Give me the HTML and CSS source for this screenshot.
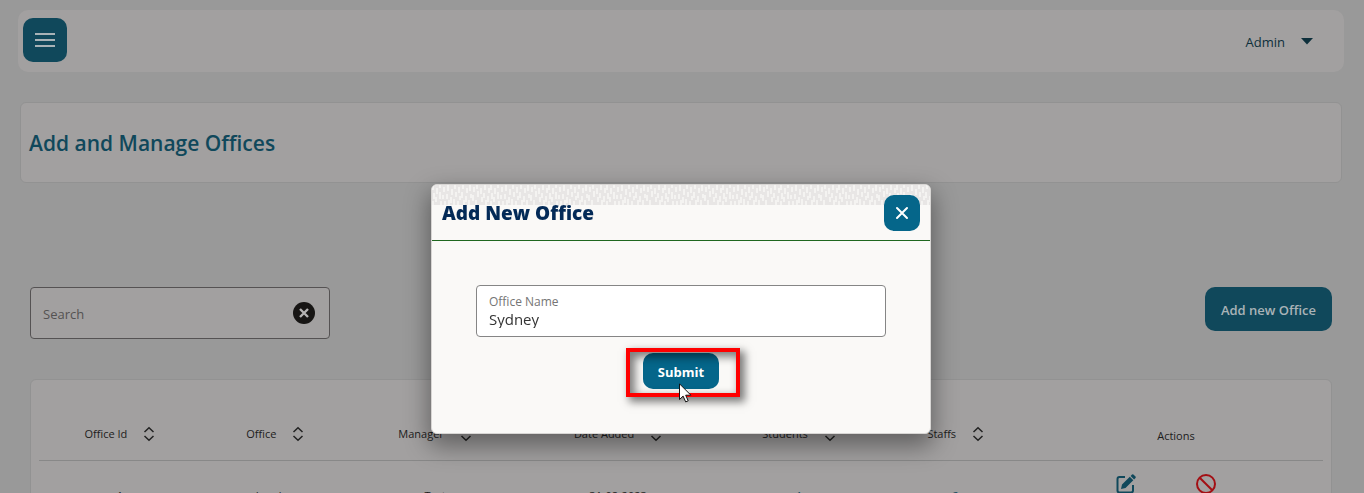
FILE: index.html
```html
<!DOCTYPE html>
<html lang="en">
<head>
<meta charset="utf-8">
<title>Add and Manage Offices</title>
<link rel="stylesheet" href="styles.css">
</head>
<body>
<svg class="defs" aria-hidden="true">
  <symbol id="sort" viewBox="0 0 12 16"><path d="M1.500 6 6 1.800 10.500 6M1.500 10 6 14.200 10.500 10" fill="none" stroke="#222" stroke-width="1.500"/></symbol>
</svg>
<div class="page">
  <header class="topbar">
    <button class="menu" aria-label="Menu"><svg width="22" height="16" viewBox="0 0 22 16"><path d="M1 2h20M1 8h20M1 14h20" stroke="#a9b3b7" stroke-width="2"/></svg></button>
    <button class="account">Admin <svg width="12" height="7" viewBox="0 0 12 7"><path d="M0 0h12L6 6.500z" fill="#0d2f3b"/></svg></button>
  </header>
  <section class="title-card"><h1>Add and Manage Offices</h1></section>
  <main class="content">
    <div class="tools">
      <div class="search">
        <input type="text" placeholder="Search" aria-label="Search">
        <button class="clear" aria-label="Clear search"><svg width="22" height="22" viewBox="0 0 22 22"><circle cx="11" cy="11" r="11" fill="#171514"/><path d="m7 7 8 8M15 7l-8 8" stroke="#b4b2b2" stroke-width="2.400"/></svg></button>
      </div>
      <button class="add">Add new Office</button>
    </div>
    <div class="table-card">
      <table>
        <colgroup><col class="c-id"><col class="c-office"><col class="c-manager"><col class="c-date"><col class="c-students"><col class="c-staffs"><col></colgroup>
        <thead><tr>
          <th><button class="sort">Office Id <svg><use href="#sort"/></svg></button></th>
          <th><button class="sort">Office <svg><use href="#sort"/></svg></button></th>
          <th><button class="sort">Manager <svg><use href="#sort"/></svg></button></th>
          <th><button class="sort">Date Added <svg><use href="#sort"/></svg></button></th>
          <th><button class="sort">Students <svg><use href="#sort"/></svg></button></th>
          <th><button class="sort">Staffs <svg><use href="#sort"/></svg></button></th>
          <th class="plain">Actions</th>
        </tr></thead>
        <tbody><tr>
          <td>1</td><td>London</td><td>Test</td><td>31-08-2023</td>
          <td><a href="#">1</a></td><td><a href="#">2</a></td>
          <td><div class="actions">
            <button aria-label="Edit"><svg width="20" height="20" viewBox="0 0 20 20"><path d="M9 3H3.500Q1.500 3 1.500 5v11.500q0 2 2 2H15q2 0 2-2V11" fill="none" stroke="#10485b" stroke-width="2"/><path d="m5 15 1-4.500 7.800-7.800 3.500 3.500L9.500 14zM14.600 1.900 16 .5q.7-.6 1.400 0l2.100 2.100q.6.700 0 1.400l-1.400 1.400z" fill="#10485b"/></svg></button>
            <button aria-label="Disable"><svg width="20" height="20" viewBox="0 0 20 20"><circle cx="10" cy="10" r="9" fill="none" stroke="#a30f14" stroke-width="2"/><path d="m3.700 3.700 12.600 12.600" stroke="#a30f14" stroke-width="2"/></svg></button>
          </div></td>
        </tr></tbody>
      </table>
    </div>
  </main>
</div>
<div class="backdrop">
  <form class="dialog" role="dialog" aria-labelledby="dialog-title">
    <div class="dialog-head">
      <svg class="texture" width="100%" height="20" aria-hidden="true">
        <defs><pattern id="strokes" width="58" height="21" patternUnits="userSpaceOnUse">
          <path d="M1 0v5M2 8v6M1 16v5M5 3v6M4 12v5M8 0v3M8 7v7M9 16v5M12 2v5M11 10v4M13 16v5M16 0v6M15 9v5M17 15v6M20 4v6M19 12v6M23 0v4M24 7v5M22 14v6M27 2v6M28 11v4M26 16v5M31 0v4M30 7v6M32 15v6M35 3v5M34 11v6M38 0v6M39 9v4M37 15v5M42 2v5M41 10v6M45 0v4M46 6v6M44 15v6M49 3v6M50 12v5M53 0v5M52 8v5M54 15v6M57 3v5M56 11v6" stroke="#fbfaf8" stroke-width="1.300"/>
        </pattern></defs>
        <rect width="100%" height="20" fill="#e8e6e5"/><rect width="100%" height="20" fill="url(#strokes)"/>
      </svg>
      <h2 id="dialog-title">Add New Office</h2>
      <button type="button" class="close" aria-label="Close"><svg width="14" height="14" viewBox="0 0 14 14"><path d="m2 2 10 10M12 2 2 12" stroke="#fff" stroke-width="2" stroke-linecap="round"/></svg></button>
    </div>
    <div class="dialog-body">
      <div class="field"><label for="office">Office Name</label><input id="office" type="text" value="Sydney"></div>
      <div class="submit-wrap">
        <button type="button" class="submit">Submit</button>
        <div class="highlight"></div>
        <svg class="cursor" width="13" height="20" viewBox="0 0 13 20"><path d="M.5.8v15.700l3.600-3.400 2.600 5.800 2.500-1.100-2.500-5.600h5.200z" fill="#fff" stroke="#111"/></svg>
      </div>
    </div>
  </form>
</div>
</body>
</html>
```

FILE: styles.css
```css
* { box-sizing: border-box; }
html, body { height: 100%; }
body { margin: 0; overflow: hidden; background: #999; color: #1c1c1c; font-family: "Segoe UI", "Open Sans", "Noto Sans", sans-serif; }
button, input { font: inherit; color: inherit; }
button { border: 0; padding: 0; background: none; }
.defs { position: absolute; width: 0; height: 0; }
.page { height: 100%; overflow: hidden; padding: 10px 20px 0 18px; }
.topbar { display: flex; align-items: flex-start; justify-content: space-between; height: 62px; padding: 8px 31px 0 5px; border-radius: 10px; background: #a2a0a0; }
.menu { display: grid; place-items: center; width: 44px; height: 44px; border-radius: 10px; background: #10485b; }
.account { display: flex; align-items: center; gap: 16px; height: 47px; font-size: 13px; color: #0d2f3b; }
.title-card { display: flex; align-items: center; height: 81px; margin: 30px 2px 0; padding: 0 8px; border: 1px solid #929292; border-radius: 6px; background: #a2a0a0; }
h1 { margin: 0; font-size: 21px; font-weight: 600; color: #10485b; }
.content { padding: 104px 12px 0; }
.tools { display: flex; align-items: flex-start; justify-content: space-between; }
.search { display: flex; align-items: center; width: 300px; height: 52px; padding: 0 14px 0 12px; border: 1px solid #555253; border-radius: 4px; background: #a2a0a0; }
.search input { flex: 1; min-width: 0; padding: 2px 0 0; border: 0; background: none; outline: 0; font-size: 13px; }
.search input::placeholder { color: #545252; opacity: 1; }
.clear { display: grid; }
.add { height: 44px; padding: 2px 16px 0; border-radius: 10px; background: #10485b; color: #a9b3b7; font-size: 13px; font-weight: 600; }
.table-card { height: 300px; margin-top: 40px; padding: 28px 8px; border: 1px solid #929292; border-radius: 6px; background: #a2a0a0; }
table { width: 100%; table-layout: fixed; border-collapse: collapse; font-size: 11px; }
.c-id { width: 12.6%; }
.c-office { width: 11.6%; }
.c-manager { width: 13.3%; }
.c-date { width: 15.2%; }
.c-students { width: 13%; }
.c-staffs { width: 11.4%; }
th { height: 52px; padding: 0; border-bottom: 1px solid #888; font-weight: 400; }
.plain { padding-top: 3px; }
.sort { display: inline-flex; align-items: center; gap: 16px; }
.sort svg { width: 12px; height: 16px; }
td { height: 70px; padding: 0; text-align: center; }
td a { color: #10485b; text-decoration: none; }
.actions { display: flex; justify-content: center; gap: 60px; padding-bottom: 22px; margin-right: 20px; }
.actions button { display: grid; }
.backdrop { position: fixed; inset: 0; display: flex; align-items: flex-start; justify-content: center; padding: 184px 2px 0 0; }
.dialog { width: 500px; max-width: 100%; border: 1px solid #d8d6d4; border-radius: 6px; overflow: clip; background: #faf9f7; box-shadow: 0 10px 24px 2px rgba(0, 0, 0, .4); }
.dialog-head { position: relative; display: flex; align-items: center; justify-content: space-between; height: 56px; padding: 0 10px; border-bottom: 1px solid #1f671f; }
.texture { position: absolute; top: 0; left: 0; }
h2 { position: relative; margin: 0; font-size: 19px; font-weight: 800; color: #032a57; }
.close { position: relative; display: grid; place-items: center; width: 36px; height: 36px; border-radius: 10px; background: #05668a; }
.dialog-body { display: flex; flex-direction: column; align-items: center; gap: 16px; padding: 44px; }
.field { display: flex; flex-direction: column; width: 100%; height: 52px; padding: 8px 12px 0; border: 1px solid #858585; border-radius: 4px; background: #fff; }
.field label { font-size: 12px; line-height: 16px; color: #757575; }
.field input { width: 100%; height: 18px; padding: 0; border: 0; outline: 0; background: none; font-size: 15px; color: #333; }
.submit-wrap { position: relative; }
.submit { display: block; width: 76px; height: 36px; padding-top: 2px; border-radius: 10px; background: #05668a; color: #fff; font-size: 13px; font-weight: 700; }
.highlight { position: absolute; inset: -5px -21px -8px -17px; border: 4px solid #f00; box-shadow: 4px 4px 8px 1px rgba(0, 0, 0, .5), inset 4px 4px 8px 1px rgba(0, 0, 0, .5); }
.cursor { position: absolute; top: 30px; left: 36px; }
```
